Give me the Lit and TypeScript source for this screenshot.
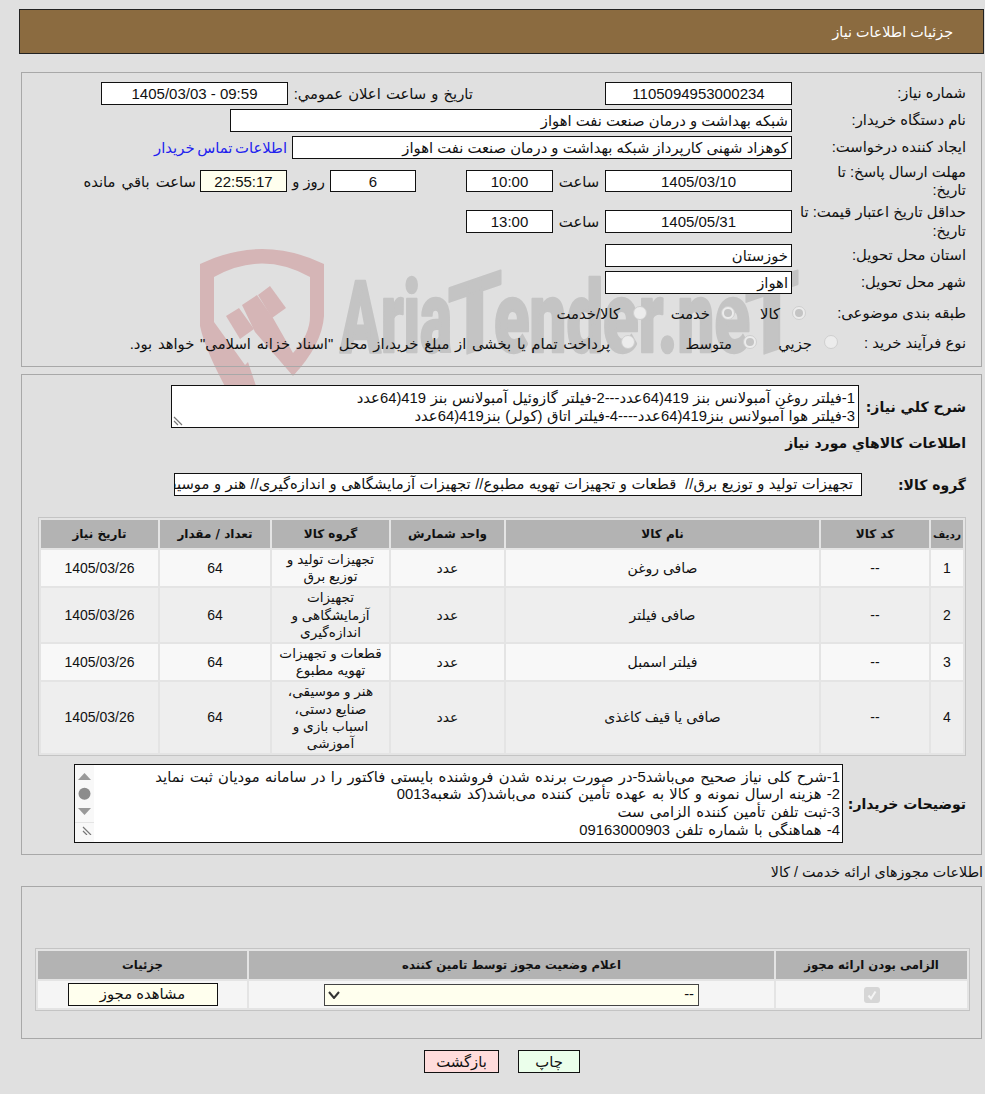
import { LitElement, html, css, svg } from "lit";
import { customElement } from "lit/decorators.js";

const rows = [
  ["1", "--", "صافی روغن", "عدد", "تجهیزات تولید و توزیع برق", "64", "1405/03/26"],
  ["2", "--", "صافی فیلتر", "عدد", "تجهیزات آزمایشگاهی و اندازه‌گیری", "64", "1405/03/26"],
  ["3", "--", "فیلتر اسمبل", "عدد", "قطعات و تجهیزات تهویه مطبوع", "64", "1405/03/26"],
  ["4", "--", "صافی یا قیف کاغذی", "عدد", "هنر و موسیقی، صنایع دستی، اسباب بازی و آموزشی", "64", "1405/03/26"],
];

@customElement("app-root")
export class AppRoot extends LitElement {
  static styles = css`
    :host { display: block; position: relative; width: 985px; height: 1094px; background: #e0e0e0; overflow: hidden;
      font-family: "Liberation Sans", "DejaVu Sans", sans-serif; font-size: 14.8px; color: #111; }
    .wm { position: absolute; left: 190px; top: 240px; width: 640px; height: 160px; }
    .wm text { font-family: "Roboto", sans-serif; font-weight: 900; }
    .page { position: relative; direction: rtl; display: flex; flex-direction: column; padding: 9px 1px 0 0; }
    .head { margin: 0 0 18px 19px; height: 43px; border: 1px solid #222; background: #8b6b40; color: #fff; display: flex; align-items: center; padding-right: 30px; font-size: 14.3px; }
    .panel { margin: 0 2px 0 21px; border: 1px solid #a8a8a8; box-sizing: border-box; }
    .p1 { height: 295px; padding: 9px 15px 0 0; display: flex; flex-direction: column; gap: 4px; margin-bottom: 7px; }
    .row { display: flex; align-items: center; min-height: 23px; white-space: nowrap; flex: none; }
    .label { width: 174px; flex: none; line-height: 18.5px; white-space: normal; }
    .r4 { height: 36px; }
    .r5 { height: 37px; }
    .r8 { height: 31px; }
    .r9 { height: 20px; min-height: 20px; }
    .box { background: #fff; border: 1px solid #111; box-sizing: border-box; height: 23px; display: flex; align-items: center; justify-content: center; flex: none; white-space: nowrap; overflow: hidden; }
    .r4 .box { height: 22px; }
    .start { justify-content: flex-start; padding: 0 3px; }
    .w187 { width: 187px; }
    .w87 { width: 87px; }
    .word { width: 52px; text-align: center; flex: none; }
    .pubLabel { width: 180px; flex: none; margin-right: 132px; margin-left: 5px; text-align: right; word-spacing: 1px; }
    .num { font-size: 15px; }
    .link { color: #2222ee; margin-right: 5px; word-spacing: -1.5px; }
    .left { margin-right: 4px; word-spacing: 2px; }
    .cream { background: #ffffee; }
    .opt { display: flex; align-items: center; flex: none; }
    .radio { width: 14px; height: 14px; border-radius: 50%; border: 1px solid #cfcfcf; background: #ececec; box-sizing: border-box; flex: none; display: flex; align-items: center; justify-content: center; position: relative; top: -1px; }
    .radio.on::after { content: ""; width: 8px; height: 8px; border-radius: 50%; background: #c4c4c4; }
    .sentence { margin-right: 11px; word-spacing: 1.6px; }
    .p2 { height: 481px; padding: 10px 15px 0 15px; display: flex; flex-direction: column; }
    .p2 > * { flex: none; }
    .bold { font-weight: 700; font-size: 14px; font-family: "DejaVu Sans", sans-serif; }
    .desc { display: flex; align-items: center; }
    .desc .bold { width: 107px; flex: none; }
    .area { background: #fff; border: 1px solid #111; box-sizing: border-box; position: relative; line-height: 17.7px; overflow: hidden; white-space: nowrap; flex: none; }
    .a1 { width: 688px; height: 43px; padding: 4px 3px 0 0; word-spacing: 0.5px; }
    .grip { position: absolute; left: 1px; bottom: 1px; width: 10px; height: 10px; }
    .title { margin-top: 1px; height: 28px; display: flex; align-items: center; }
    .grp { display: flex; align-items: center; margin-top: 16px; }
    .grp .bold { width: 104px; flex: none; }
    .grpbox { width: 688px; height: 23px; background: #fff; border: 1px solid #111; box-sizing: border-box; padding: 0 8px 0 2px; line-height: 21px; white-space: pre; overflow: hidden; word-spacing: 0.4px; }
    table { border-collapse: separate; border-spacing: 2px; border: 1px solid #c4c4c4; table-layout: fixed; background: #e4e4e4; }
    .t1 { width: 928px; margin-top: 21px; }
    th { background: #b3b3b3; font-weight: 700; font-size: 12px; height: 28px; padding: 0; font-family: "DejaVu Sans", sans-serif; }
    .narrow { font-size: 10.5px; }
    td { text-align: center; padding: 1px 4px; line-height: 17.2px; height: 34px; font-size: 14px; }
    tbody tr:nth-child(odd) td { background: #f8f8f8; }
    tbody tr:nth-child(even) td { background: #eeeeee; }
    td.g { font-size: 13.6px; }
    .exp { display: flex; align-items: center; margin-top: 8px; }
    .exp .bold { width: 123px; flex: none; }
    .a2 { width: 769px; height: 79px; padding: 3.5px 2px 0 0; word-spacing: 1.2px; }
    .sb { position: absolute; left: 0; top: 0; bottom: 0; width: 19px; background: #f8f8f8; display: flex; flex-direction: column; align-items: center; }
    .sb svg { display: block; }
    .sbc { position: absolute; left: 0; bottom: 0; width: 19px; height: 19px; border-top: 1px solid #e4e4e4; }
    .sec { margin: 7px 0 4px; height: 20px; line-height: 20px; font-size: 14.3px; padding-right: 1px; }
    .p3 { height: 153px; padding: 0 11px 0 0; }
    .t2 { width: 935px; margin: 61px 0 0 0; }
    .t2 th { height: 28px; font-size: 11.7px; }
    .t2 td { height: 27px; padding: 0; background: #f5f5f5 !important; font-size: 14.8px; }
    .sel { width: 375px; height: 22px; box-sizing: border-box; margin: 0 auto; background: #ffffee; border: 1px solid #444; display: flex; align-items: center; justify-content: space-between; padding: 0 4px 0 3px; }
    .btn { height: 23px; box-sizing: border-box; border: 1px solid #111; display: flex; align-items: center; justify-content: center; }
    .view { width: 150px; margin: 0 auto; background: #ffffee; }
    .check { width: 16px; height: 16px; border-radius: 3px; background: #d6d6d6; margin: 0 auto; display: flex; align-items: center; justify-content: center; }
    .foot { display: flex; justify-content: center; gap: 19px; margin-top: 11px; padding-left: 20px; }
    .back { width: 75px; background: #ffdcdc; }
    .print { width: 62px; background: #ebffeb; }
  `;

  private watermark() {
    return html`<svg class="wm" viewBox="190 240 640 160" aria-hidden="true">
      ${svg`
      <g fill="#d5b5b6">
        <path d="M200 264 Q262 234 324 264 V316 Q322 345 293 376 L255 332 L242 305 L257 295 L273 318 L293 353 Q310 335 310 316 V277 Q262 250 214 277 V322 L245 365 L248 362 L258 392 H228 Q205 350 200 326 Z"/>
        <path d="M226 316 L239 308 L254 329 L240 339Z"/>
        <path d="M258 295 L270 286 L286 308 L272 318Z"/>
      </g>
      <g fill="#c4c4c4" stroke="#c4c4c4" stroke-width="2.5" stroke-linejoin="round" font-size="100">
        <text x="340" y="352" textLength="112" lengthAdjust="spacingAndGlyphs">Aria</text>
        <text transform="translate(448 360) skewY(-19)" textLength="54" lengthAdjust="spacingAndGlyphs">T</text>
        <text x="494" y="352" textLength="256" lengthAdjust="spacingAndGlyphs">ender.ne</text>
        <text transform="translate(745 360) skewY(-19)" textLength="54" lengthAdjust="spacingAndGlyphs">T</text>
      </g>`}
    </svg>`;
  }

  render() {
    return html`
      ${this.watermark()}
      <div class="page">
        <div class="head">جزئیات اطلاعات نیاز</div>
        <div class="panel p1">
          <div class="row"><div class="label">شماره نیاز:</div><div class="box w187 num">1105094953000234</div><div class="pubLabel">تاريخ و ساعت اعلان عمومي:</div><div class="box w187 num">09:59 - 1405/03/03</div></div>
          <div class="row"><div class="label">نام دستگاه خریدار:</div><div class="box start" style="width:562px">شبکه بهداشت و درمان صنعت نفت اهواز</div></div>
          <div class="row"><div class="label">ایجاد کننده درخواست:</div><div class="box start" style="width:500px">کوهزاد شهنی کارپرداز شبکه بهداشت و درمان صنعت نفت اهواز</div><span class="link">اطلاعات تماس خریدار</span></div>
          <div class="row r4"><div class="label">مهلت ارسال پاسخ: تا<br>تاریخ:</div><div class="box w187 num">1405/03/10</div><div class="word">ساعت</div><div class="box w87 num">10:00</div><div style="width:50px;flex:none"></div><div class="box num" style="width:86px">6</div><div class="word" style="width:43px">روز و</div><div class="box w87 cream num">22:55:17</div><div class="left">ساعت باقي مانده</div></div>
          <div class="row r5"><div class="label">حداقل تاریخ اعتبار قیمت: تا تاریخ:</div><div class="box w187 num">1405/05/31</div><div class="word">ساعت</div><div class="box w87 num">13:00</div></div>
          <div class="row"><div class="label">استان محل تحویل:</div><div class="box w187 start">خوزستان</div></div>
          <div class="row"><div class="label">شهر محل تحویل:</div><div class="box w187 start">اهواز</div></div>
          <div class="row r8"><div class="label" style="width:160px">طبقه بندی موضوعی:</div>
            <div class="opt" style="width:71px"><div class="radio on"></div><span style="margin-right:12px">کالا</span></div>
            <div class="opt" style="width:88px"><div class="radio on"></div><span style="margin-right:11px">خدمت</span></div>
            <div class="opt"><div class="radio"></div><span style="margin-right:13px">کالا/خدمت</span></div></div>
          <div class="row r9"><div class="label" style="width:128px">نوع فرآیند خرید :</div>
            <div class="opt" style="width:81px"><div class="radio"></div><span style="margin-right:12px">جزیي</span></div>
            <div class="opt" style="width:122px"><div class="radio on"></div><span style="margin-right:11px">متوسط</span></div>
            <div class="opt"><div class="radio"></div><span class="sentence">پرداخت تمام یا بخشی از مبلغ خرید،از محل "اسناد خزانه اسلامی" خواهد بود.</span></div></div>
        </div>
        <div class="panel p2">
          <div class="desc"><div class="bold">شرح کلي نیاز:</div><div class="area a1">1-فیلتر روغن آمبولانس بنز 419(64عدد---2-فیلتر گازوئیل آمبولانس بنز 419(64عدد<br>3-فیلتر هوا آمبولانس بنز419(64عدد----4-فیلتر اتاق (کولر) بنز419(64عدد
            <svg class="grip" viewBox="0 0 10 10"><path d="M1 1l8 8M1 5l4 4" stroke="#777" stroke-width="1.2"/></svg></div></div>
          <div class="bold title">اطلاعات کالاهاي مورد نیاز</div>
          <div class="grp"><div class="bold">گروه کالا:</div><div class="grpbox">تجهیزات تولید و توزیع برق//  قطعات و تجهیزات تهویه مطبوع// تجهیزات آزمایشگاهی و اندازه‌گیری// هنر و موسیقی، صنایع دستی</div></div>
          <table class="t1"><colgroup><col style="width:32px"><col style="width:108px"><col style="width:313px"><col style="width:113px"><col style="width:117px"><col style="width:110px"><col style="width:117px"></colgroup>
            <thead><tr><th class="narrow">ردیف</th><th>کد کالا</th><th>نام کالا</th><th>واحد شمارش</th><th>گروه کالا</th><th>تعداد / مقدار</th><th>تاریخ نیاز</th></tr></thead>
            <tbody>${rows.map(r => html`<tr>${r.map((c, i) => html`<td class="${i === 4 ? "g" : ""}">${c}</td>`)}</tr>`)}</tbody></table>
          <div class="exp"><div class="bold">توضیحات خریدار:</div><div class="area a2">1-شرح کلی نیاز صحیح می‌باشد5-در صورت برنده شدن فروشنده بایستی فاکتور را در سامانه مودیان ثبت نماید<br>2- هزینه ارسال نمونه و کالا به عهده تأمین کننده می‌باشد(کد شعبه0013<br>3-ثبت تلفن تأمین کننده الزامی ست<br>4- هماهنگی با شماره تلفن 09163000903
            <div class="sb"><svg width="19" height="58" viewBox="0 0 19 58"><path d="M3 15h13L9.5 8z" fill="#999"/><circle cx="9.5" cy="28.7" r="6" fill="#8c8c8c"/><path d="M3 43h13L9.5 50z" fill="#999"/></svg><div class="sbc"><svg width="12" height="12" viewBox="0 0 12 12"><path d="M1 4l8 8M1 8l4 4" stroke="#777" stroke-width="1.2"/></svg></div></div></div></div>
        </div>
        <div class="sec">اطلاعات مجوزهای ارائه خدمت / کالا</div>
        <div class="panel p3">
          <table class="t2"><colgroup><col style="width:191px"><col style="width:525px"><col style="width:209px"></colgroup>
            <thead><tr><th>الزامی بودن ارائه مجوز</th><th>اعلام وضعیت مجوز توسط تامین کننده</th><th>جزئیات</th></tr></thead>
            <tbody><tr><td><div class="check"><svg width="12" height="12" viewBox="0 0 12 12"><path d="M2.5 6.5l2.5 3 4.5-7" fill="none" stroke="#f4f4f4" stroke-width="2"/></svg></div></td>
            <td><div class="sel"><span>--</span><svg width="12" height="8" viewBox="0 0 12 8"><path d="M1 1l5 6 5-6" fill="none" stroke="#333" stroke-width="2"/></svg></div></td>
            <td><div class="btn view">مشاهده مجوز</div></td></tr></tbody></table>
        </div>
        <div class="foot"><div class="btn print">چاپ</div><div class="btn back">بازگشت</div></div>
      </div>`;
  }
}
